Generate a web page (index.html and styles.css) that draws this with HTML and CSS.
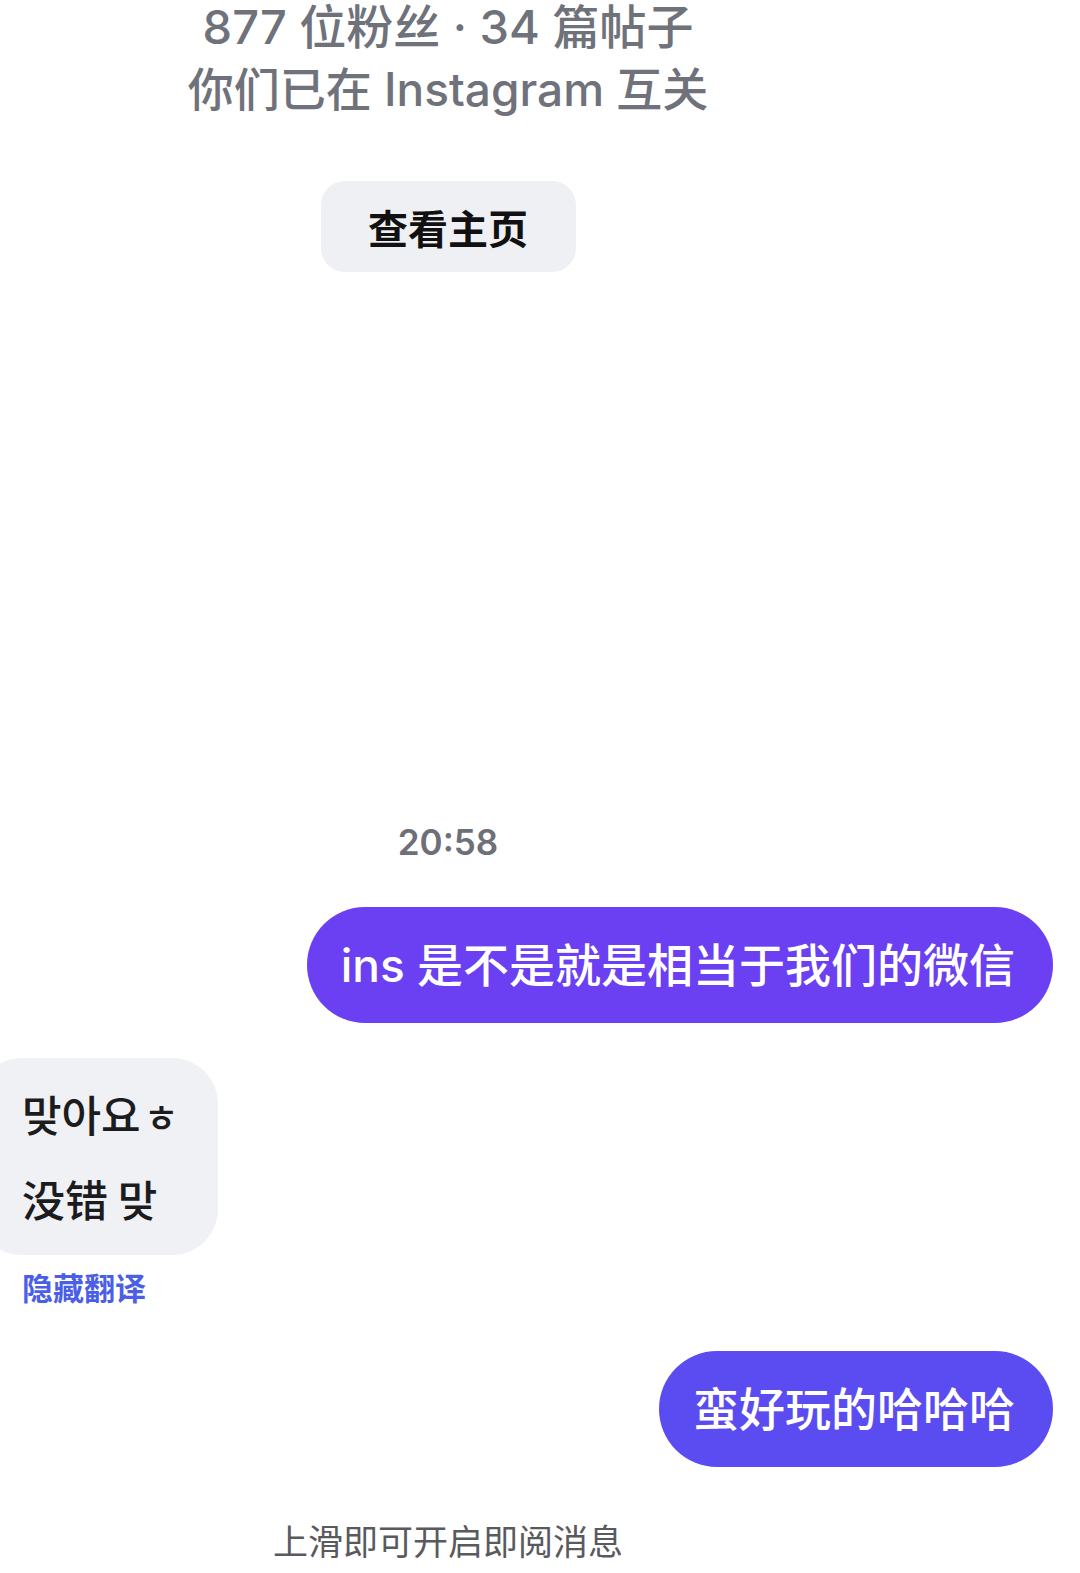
FILE: index.html
```html
<!DOCTYPE html>
<html lang="zh-CN">
<head>
<meta charset="utf-8">
<title>Chat</title>
<link rel="stylesheet" href="styles.css">
</head>
<body>
<main class="chat">
  <header class="profile">
    <p class="stats">877 位粉丝 · 34 篇帖子</p>
    <p class="mutual">你们已在 Instagram 互关</p>
    <button class="view-profile">查看主页</button>
  </header>

  <div class="time">20:58</div>

  <div class="row row-out first-out">
    <div class="bubble bubble-out tone-a">ins 是不是就是相当于我们的微信</div>
  </div>

  <div class="row row-in">
    <div class="bubble bubble-in">
      <p class="orig">맞아요<span class="jamo">ㅎ</span></p>
      <p class="trans">没错 맞</p>
    </div>
    <a class="translate">隐藏翻译</a>
  </div>

  <div class="row row-out second-out">
    <div class="bubble bubble-out tone-b">蛮好玩的哈哈哈</div>
  </div>

  <div class="hint">上滑即可开启即阅消息</div>
</main>
</body>
</html>
```

FILE: styles.css
```css
* { box-sizing: border-box; }
html, body { margin: 0; padding: 0; background: #ffffff; }
body {
  width: 1080px;
  height: 1573px;
  overflow: hidden;
  font-family: "Inter", "Noto Sans CJK SC", sans-serif;
}
.chat {
  display: flex;
  flex-direction: column;
  width: 1080px;
}
.profile {
  width: 896px;
  display: flex;
  flex-direction: column;
  align-items: center;
  margin-top: -5px;
}
.stats, .mutual {
  margin: 0;
  font-size: 47px;
  line-height: 63px;
  font-weight: 500;
  color: #6f727a;
  white-space: nowrap;
}
.mutual { font-size: 46px; }
.view-profile {
  margin-top: 60px;
  width: 255px;
  height: 91px;
  border: none;
  border-radius: 24px;
  background: #eff0f3;
  font-family: "Noto Sans CJK SC", sans-serif;
  font-weight: 700;
  font-size: 40px;
  color: #111111;
  padding: 0;
}
.time {
  width: 896px;
  text-align: center;
  margin-top: 548px;
  font-size: 35px;
  line-height: 44px;
  font-weight: 600;
  color: #6d7077;
}
.row { display: flex; flex-direction: column; }
.row-out { align-items: flex-end; padding-right: 27px; }
.first-out { margin-top: 43px; }
.bubble-out {
  height: 116px;
  border-radius: 58px;
  padding: 0 38px 0 34px;
  font-family: "Inter", "Noto Sans CJK SC", sans-serif;
  font-size: 46px;
  line-height: 116px;
  color: #ffffff;
  font-weight: 500;
  white-space: nowrap;
}
.tone-a { background: #6b3ff2; }
.tone-b { background: #5a4cf1; }
.row-in { align-items: flex-start; margin-top: 35px; }
.bubble-in {
  margin-left: -24px;
  width: 242px;
  background: #f0f1f4;
  border-radius: 46px;
  padding: 14px 0 16px 46px;
  font-family: "Noto Sans CJK KR", "Noto Sans CJK SC", sans-serif;
  font-size: 43px;
  line-height: 82px;
  color: #1c1c1e;
  font-weight: 500;
}
.bubble-in p { margin: 0; white-space: nowrap; }
.jamo { font-size: 38px; margin-left: 3px; }
.trans { font-family: "Noto Sans CJK SC", sans-serif; }
.translate {
  margin: 12px 0 0 22px;
  font-family: "Noto Sans CJK SC", sans-serif;
  font-weight: 700;
  font-size: 31px;
  line-height: 40px;
  color: #4b5fe6;
}
.second-out { margin-top: 44px; }
.hint {
  width: 896px;
  text-align: center;
  margin-top: 50px;
  font-family: "Noto Sans CJK SC", sans-serif;
  font-size: 35px;
  line-height: 46px;
  color: #595a5e;
}
```
